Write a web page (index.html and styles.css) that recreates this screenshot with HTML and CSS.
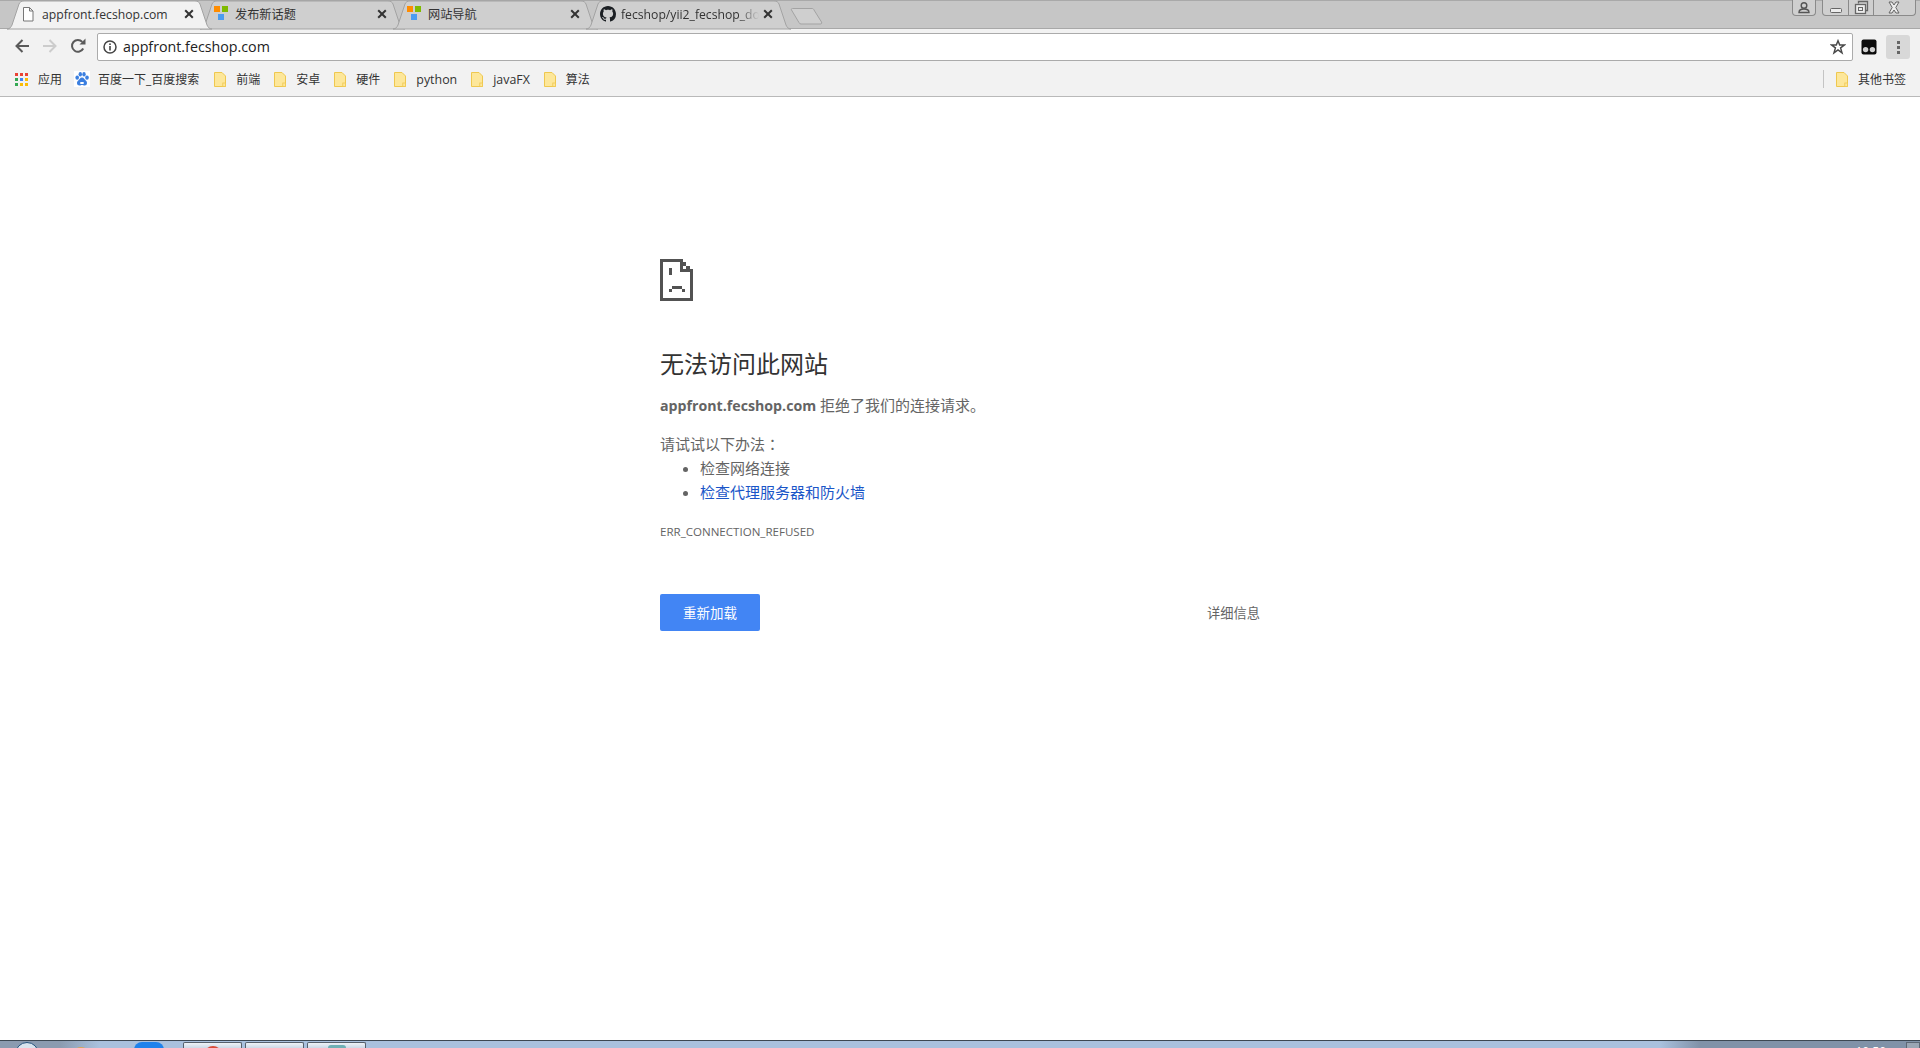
FILE: index.html
```html
<!DOCTYPE html>
<html lang="zh-CN">
<head>
<meta charset="utf-8">
<title>appfront.fecshop.com</title>
<link rel="stylesheet" href="styles.css">
</head>
<body>
<div class="browser">
  <div class="tabstrip">
    <div class="tab active">
      <svg class="tab-shape" viewBox="0 0 205 29"><path d="M0 29C3 29 4 27 5 25L12 4C13 2 14 1 17 1L188 1C191 1 192 2 193 4L200 25C201 27 202 29 205 29Z"/></svg>
      <svg class="tab-icon doc" viewBox="0 0 16 16"><path d="M3.5 1.5H9.5L13 5V15H3.5ZM9.5 1.5V5H13" fill="#fff" stroke="#777" stroke-width="1"/></svg>
      <span class="tab-title">appfront.fecshop.com</span>
      <svg class="tab-close" viewBox="0 0 10 10"><path d="M1.2 1.2L8.8 8.8M8.8 1.2L1.2 8.8"/></svg>
    </div>
    <div class="tab">
      <svg class="tab-shape" viewBox="0 0 205 29"><path d="M0 29C3 29 4 27 5 25L12 4C13 2 14 1 17 1L188 1C191 1 192 2 193 4L200 25C201 27 202 29 205 29Z"/></svg>
      <svg class="tab-icon" viewBox="0 0 16 16"><rect x="0" y="0" width="6" height="6" fill="#ff8c00"/><rect x="8" y="0" width="6" height="6" fill="#7fba00"/><rect x="4" y="8" width="6" height="6" fill="#4b9cf0"/></svg>
      <span class="tab-title">发布新话题</span>
      <svg class="tab-close" viewBox="0 0 10 10"><path d="M1.2 1.2L8.8 8.8M8.8 1.2L1.2 8.8"/></svg>
    </div>
    <div class="tab">
      <svg class="tab-shape" viewBox="0 0 205 29"><path d="M0 29C3 29 4 27 5 25L12 4C13 2 14 1 17 1L188 1C191 1 192 2 193 4L200 25C201 27 202 29 205 29Z"/></svg>
      <svg class="tab-icon" viewBox="0 0 16 16"><rect x="0" y="0" width="6" height="6" fill="#ff8c00"/><rect x="8" y="0" width="6" height="6" fill="#7fba00"/><rect x="4" y="8" width="6" height="6" fill="#4b9cf0"/></svg>
      <span class="tab-title">网站导航</span>
      <svg class="tab-close" viewBox="0 0 10 10"><path d="M1.2 1.2L8.8 8.8M8.8 1.2L1.2 8.8"/></svg>
    </div>
    <div class="tab">
      <svg class="tab-shape" viewBox="0 0 205 29"><path d="M0 29C3 29 4 27 5 25L12 4C13 2 14 1 17 1L188 1C191 1 192 2 193 4L200 25C201 27 202 29 205 29Z"/></svg>
      <svg class="tab-icon" viewBox="0 0 16 16"><path fill="#1b1f23" d="M8 0C3.58 0 0 3.58 0 8c0 3.54 2.29 6.53 5.47 7.59.4.07.55-.17.55-.38 0-.19-.01-.82-.01-1.49-2.01.37-2.53-.49-2.69-.94-.09-.23-.48-.94-.82-1.13-.28-.15-.68-.52-.01-.53.63-.01 1.08.58 1.23.82.72 1.21 1.87.87 2.33.66.07-.52.28-.87.51-1.07-1.78-.2-3.64-.89-3.64-3.95 0-.87.31-1.59.82-2.15-.08-.2-.36-1.02.08-2.12 0 0 .67-.21 2.2.82.64-.18 1.32-.27 2-.27.68 0 1.36.09 2 .27 1.53-1.04 2.2-.82 2.2-.82.44 1.1.16 1.92.08 2.12.51.56.82 1.27.82 2.15 0 3.07-1.87 3.75-3.65 3.95.29.25.54.73.54 1.48 0 1.07-.01 1.93-.01 2.2 0 .21.15.46.55.38A8.013 8.013 0 0 0 16 8c0-4.42-3.58-8-8-8z"/></svg>
      <span class="tab-title fade">fecshop/yii2_fecshop_docs</span>
      <svg class="tab-close" viewBox="0 0 10 10"><path d="M1.2 1.2L8.8 8.8M8.8 1.2L1.2 8.8"/></svg>
    </div>
    <svg class="new-tab" viewBox="0 0 36 17"><path d="M5.5 .5H25C26 .5 26.6 1 27 2L34.5 14C35 15.5 34.5 16 33 16H14C13 16 12.4 15.5 12 14.6L4.5 2C4 1 4.5 .5 5.5 .5Z"/></svg>
    <div class="window-controls">
      <div class="win-btn user">
        <svg viewBox="0 0 24 16" width="24" height="16"><circle cx="12" cy="5.5" r="2.8" fill="none" stroke="#555" stroke-width="1.4"/><path d="M7 12.5C7 9.8 9 9 12 9S17 9.8 17 12.5Z" fill="none" stroke="#555" stroke-width="1.4"/></svg>
      </div>
      <div class="win-group">
        <div class="win-btn min"><svg viewBox="0 0 26 16" width="26" height="16"><rect x="7.5" y="8.5" width="11" height="4" rx="1" fill="#ececec" stroke="#666"/></svg></div>
        <div class="win-btn max"><svg viewBox="0 0 25 16" width="25" height="16"><path d="M9.5 3.5V1.5H18.5V10.5H16.5" fill="none" stroke="#666" stroke-width="1.3"/><rect x="6.5" y="4.5" width="10" height="9" fill="#ececec" stroke="#666" stroke-width="1.3"/><rect x="9.5" y="7.5" width="4" height="3" fill="none" stroke="#666"/></svg></div>
        <div class="win-btn close"><svg viewBox="0 0 41 16" width="41" height="16"><path d="M15 2H18L20 5L22 2H25L21.8 7.5L25 13H22L20 10L18 13H15L18.2 7.5Z" fill="#ececec" stroke="#666"/></svg></div>
      </div>
    </div>
  </div>

  <div class="toolbar">
    <svg class="nav-icon" viewBox="0 0 16 16"><path d="M15 8H3M8.5 2L2.5 8L8.5 14" fill="none" stroke="#5a5a5a" stroke-width="2"/></svg>
    <svg class="nav-icon" viewBox="0 0 16 16"><path d="M1 8H13M7.5 2L13.5 8L7.5 14" fill="none" stroke="#ccc" stroke-width="2"/></svg>
    <svg class="nav-icon" viewBox="0 0 16 16"><path d="M13.2 10.5A5.9 5.9 0 1 1 12.3 3.9" fill="none" stroke="#5a5a5a" stroke-width="2"/><path d="M9.5 6.5H15.5V.5Z" fill="#5a5a5a"/></svg>
    <div class="omnibox">
      <svg class="info" viewBox="0 0 14 14"><circle cx="7" cy="7" r="6" fill="none" stroke="#444" stroke-width="1.5"/><rect x="6.2" y="6" width="1.6" height="4.5" fill="#444"/><rect x="6.2" y="3.4" width="1.6" height="1.6" fill="#444"/></svg>
      <span class="url">appfront.fecshop.com</span>
      <svg class="star" viewBox="0 0 16 16"><path d="M8 1.8L9.7 6H14.4L10.6 8.9L12 13.8L8 11L4 13.8L5.4 8.9L1.6 6H6.3Z" fill="none" stroke="#4a4a4a" stroke-width="1.5"/></svg>
    </div>
    <svg class="ext" viewBox="0 0 16 16"><rect x=".5" y=".5" width="15" height="15" rx="2" fill="#0b0b0b"/><circle cx="4.6" cy="10.6" r="2.7" fill="#cfcfcf"/><circle cx="11.4" cy="10.6" r="2.7" fill="#cfcfcf"/></svg>
    <div class="menu-btn"><i></i><i></i><i></i></div>
  </div>

  <div class="bookmarks">
    <div class="bm apps">
      <svg class="bm-apps" viewBox="0 0 13 13">
        <rect x="0" y="0" width="3" height="3" fill="#ea4335"/><rect x="5" y="0" width="3" height="3" fill="#ea4335"/><rect x="10" y="0" width="3" height="3" fill="#ea4335"/>
        <rect x="0" y="5" width="3" height="3" fill="#34a853"/><rect x="5" y="5" width="3" height="3" fill="#4285f4"/><rect x="10" y="5" width="3" height="3" fill="#fbbc05"/>
        <rect x="0" y="10" width="3" height="3" fill="#34a853"/><rect x="5" y="10" width="3" height="3" fill="#fbbc05"/><rect x="10" y="10" width="3" height="3" fill="#fbbc05"/>
      </svg>
      <span>应用</span>
    </div>
    <div class="bm baidu">
      <svg class="bm-baidu" viewBox="0 0 16 16"><rect width="16" height="16" fill="#fff"/><ellipse cx="3.2" cy="6.6" rx="1.8" ry="2.2" fill="#3b7fe0"/><ellipse cx="6.3" cy="3.2" rx="1.7" ry="2.2" fill="#3b7fe0"/><ellipse cx="10" cy="3.2" rx="1.7" ry="2.2" fill="#3b7fe0"/><ellipse cx="13" cy="6.6" rx="1.8" ry="2.2" fill="#3b7fe0"/><path d="M8 6.5C6 6.5 5.5 8.5 4 9.8C2.5 11 2.5 14.5 5.5 14.5C6.8 14.5 7 14 8 14C9 14 9.5 14.5 10.8 14.5C13.5 14.5 13.5 11 12 9.8C10.5 8.5 10 6.5 8 6.5Z" fill="#3b7fe0"/><path d="M6.3 11H9.7V13H6.3Z" fill="#fff"/></svg>
      <span>百度一下_百度搜索</span>
    </div>
    <div class="bm"><svg class="folder" viewBox="0 0 12 15"><path d="M.5 .5H8L11.5 4V14.5H.5Z" fill="#fde79a" stroke="#efc84f"/><rect x="8.8" y="11" width="2.7" height="3.5" fill="#fde79a" stroke="#efc84f" stroke-width=".8"/></svg><span>前端</span></div>
    <div class="bm"><svg class="folder" viewBox="0 0 12 15"><path d="M.5 .5H8L11.5 4V14.5H.5Z" fill="#fde79a" stroke="#efc84f"/><rect x="8.8" y="11" width="2.7" height="3.5" fill="#fde79a" stroke="#efc84f" stroke-width=".8"/></svg><span>安卓</span></div>
    <div class="bm"><svg class="folder" viewBox="0 0 12 15"><path d="M.5 .5H8L11.5 4V14.5H.5Z" fill="#fde79a" stroke="#efc84f"/><rect x="8.8" y="11" width="2.7" height="3.5" fill="#fde79a" stroke="#efc84f" stroke-width=".8"/></svg><span>硬件</span></div>
    <div class="bm"><svg class="folder" viewBox="0 0 12 15"><path d="M.5 .5H8L11.5 4V14.5H.5Z" fill="#fde79a" stroke="#efc84f"/><rect x="8.8" y="11" width="2.7" height="3.5" fill="#fde79a" stroke="#efc84f" stroke-width=".8"/></svg><span class="latin">python</span></div>
    <div class="bm"><svg class="folder" viewBox="0 0 12 15"><path d="M.5 .5H8L11.5 4V14.5H.5Z" fill="#fde79a" stroke="#efc84f"/><rect x="8.8" y="11" width="2.7" height="3.5" fill="#fde79a" stroke="#efc84f" stroke-width=".8"/></svg><span class="latin">javaFX</span></div>
    <div class="bm"><svg class="folder" viewBox="0 0 12 15"><path d="M.5 .5H8L11.5 4V14.5H.5Z" fill="#fde79a" stroke="#efc84f"/><rect x="8.8" y="11" width="2.7" height="3.5" fill="#fde79a" stroke="#efc84f" stroke-width=".8"/></svg><span>算法</span></div>
    <div class="bm other"><svg class="folder" viewBox="0 0 12 15"><path d="M.5 .5H8L11.5 4V14.5H.5Z" fill="#fde79a" stroke="#efc84f"/><rect x="8.8" y="11" width="2.7" height="3.5" fill="#fde79a" stroke="#efc84f" stroke-width=".8"/></svg><span>其他书签</span></div>
  </div>

  <main class="page">
    <div class="error">
      <svg class="sad-icon" viewBox="0 0 100 127" shape-rendering="crispEdges">
        <path fill="#525252" d="M0 0H70V10H80V20H90V30H100V127H0ZM10 10V117H90V40H60V10ZM70 20V30H80V20Z"/>
        <rect x="27" y="28" width="10" height="20" fill="#525252"/>
        <rect x="37" y="81" width="30" height="10" fill="#525252"/>
        <rect x="27" y="91" width="10" height="8" fill="#525252"/>
        <rect x="67" y="91" width="10" height="8" fill="#525252"/>
      </svg>
      <h1 class="title">无法访问此网站</h1>
      <p class="summary"><strong>appfront.fecshop.com</strong> 拒绝了我们的连接请求。</p>
      <p class="try">请试试以下办法<span class="colon" lang="zh-TW">：</span></p>
      <ul class="suggestions">
        <li>检查网络连接</li>
        <li><a href="#">检查代理服务器和防火墙</a></li>
      </ul>
      <div class="code">ERR_CONNECTION_REFUSED</div>
      <div class="actions">
        <button class="reload">重新加载</button>
        <span class="details">详细信息</span>
      </div>
    </div>
  </main>

  <div class="taskbar">
    <span class="orb"></span>
    <span class="tb-bump orange"></span>
    <span class="tb-bump blue"></span>
    <span class="tb-win first"><i class="red"></i></span>
    <span class="tb-win"></span>
    <span class="tb-win"><i class="teal"></i></span>
    <span class="clock">10:50</span>
    <span class="show-desktop"></span>
  </div>
</div>
</body>
</html>
```
FILE: styles.css
```css
* { box-sizing: border-box; }
html, body { margin: 0; padding: 0; height: 100%; background: #fff; }
body { font-family: "Open Sans", "Noto Sans CJK SC", sans-serif; overflow: hidden; }
.browser { height: 1048px; display: flex; flex-direction: column; overflow: hidden; }

/* tab strip */
.tabstrip {
  height: 29px; flex: none; display: flex; padding-left: 7px;
  background: #c6c6c6; border-top: 1px solid #a9a9a9; border-bottom: 1px solid #a8a8a8;
}
.tab {
  position: relative; flex: none; width: 205px; height: 28px; margin-top: -1px; margin-right: -12px;
  display: flex; align-items: center; padding: 0 18px 0 14px; color: #333; font-size: 12px;
}
.tab > *:not(.tab-shape) { position: relative; }
.tab-shape { position: absolute; left: 0; top: 0; width: 205px; height: 29px; overflow: visible; }
.tab-shape path { fill: #cfcfcf; stroke: #a3a3a3; stroke-width: 1; }
.tab.active { z-index: 2; }
.tab.active .tab-shape path { fill: #f2f2f2; }
.tab-icon { flex: none; width: 16px; height: 16px; margin-right: 5px; }
.tab-icon.doc { margin-left: -1px; margin-right: 6px; }
.tab-title { flex: 1; min-width: 0; white-space: nowrap; overflow: hidden; font-size: 12.2px; line-height: 18px; padding-top: 1px; }
.tab-title.fade { -webkit-mask-image: linear-gradient(90deg, #000 85%, transparent 100%); mask-image: linear-gradient(90deg, #000 85%, transparent 100%); }
.tab-close { flex: none; width: 10px; height: 10px; margin-left: 4px; }
.tab-close path { stroke: #333; stroke-width: 2; fill: none; }
.new-tab { flex: none; width: 38px; height: 17px; margin: 7px 0 0 7px; }
.new-tab path { fill: #cfcfcf; stroke: #a3a3a3; }

.window-controls { margin-left: auto; display: flex; gap: 6px; height: 16px; margin-top: -1px; padding-right: 4px; }
.win-btn { height: 16px; display: flex; }
.win-btn.user { width: 24px; border: 1px solid #8a8a8a; border-top: 0; border-radius: 0 0 4px 4px; background: #cfcfcf; justify-content: center; }
.win-group { display: flex; border: 1px solid #8a8a8a; border-top: 0; border-radius: 0 0 4px 4px; background: #cfcfcf; }
.win-btn.min { width: 26px; border-right: 1px solid #8a8a8a; }
.win-btn.max { width: 25px; border-right: 1px solid #8a8a8a; }
.win-btn.close { width: 41px; }
.win-btn svg { flex: none; }

/* toolbar */
.toolbar { height: 32px; flex: none; display: flex; align-items: flex-end; background: #f2f2f2; padding-left: 14px; }
.nav-icon { flex: none; width: 16px; height: 16px; margin: 0 12px 7px 0; }
.omnibox {
  flex: none; width: 1756px; height: 28px; margin-left: -1px; display: flex; align-items: center;
  background: #fff; border: 1px solid #ababab; border-radius: 2px; padding: 0 6px 0 5px;
}
.info { flex: none; width: 14px; height: 14px; margin-right: 6px; }
.url { flex: 1; font-size: 14.25px; color: #222; line-height: 20px; margin-top: -1px; }
.star { flex: none; width: 16px; height: 16px; }
.ext { flex: none; width: 16px; height: 16px; margin: 0 9px 6px 8px; }
.menu-btn { flex: none; width: 24px; height: 24px; margin-bottom: 2px; background: #d8d8d8; border-radius: 3px; display: flex; flex-direction: column; align-items: center; justify-content: center; gap: 2px; }
.menu-btn i { display: block; width: 3px; height: 3px; background: #666; }

/* bookmarks */
.bookmarks { height: 36px; flex: none; display: flex; align-items: center; gap: 14px; padding: 1px 14px 0 15px; background: #f2f2f2; border-bottom: 1px solid #b9b9b9; font-size: 12px; color: #333; }
.bm { display: flex; align-items: center; gap: 10px; white-space: nowrap; }
.bm.apps { gap: 10px; margin-right: -2px; }
.bm.baidu { gap: 8px; margin-right: 1px; }
.bm .latin { font-size: 12.4px; }
.bm-apps { width: 13px; height: 13px; flex: none; }
.bm-baidu { width: 16px; height: 16px; flex: none; }
.folder { width: 12px; height: 15px; flex: none; }
.bm.other { margin-left: auto; border-left: 1px solid #c4c4c4; padding-left: 12px; }

/* error */
.page { flex: 1; min-height: 0; background: #fff; padding: 162px 0 0 660px; }
.error { width: 600px; color: #646464; font-size: 15px; }
.sad-icon { display: block; width: 33px; height: 42px; }
.title { margin: 48px 0 0; font-size: 24px; font-weight: 400; line-height: 30px; color: #333; }
.summary { margin: 16px 0 0; line-height: 20px; }
.summary strong { font-weight: 700; font-size: 14.2px; }
.try { margin: 18px 0 0; line-height: 20px; }
.colon { font-family: "Noto Sans CJK TC", sans-serif; }
.suggestions { margin: 2px 0 0; padding: 0 0 0 40px; line-height: 24px; }
.suggestions a { color: #1a56c8; text-decoration: none; }
.code { margin-top: 20px; font-size: 11.55px; line-height: 16px; }
.actions { margin-top: 54px; display: flex; align-items: center; justify-content: space-between; }
.reload { width: 100px; height: 37px; border: 0; border-radius: 2px; background: #4285f4; color: #fff; font: inherit; font-size: 13.5px; line-height: 18px; padding: 0; }
.details { font-size: 13.25px; line-height: 18px; }

/* taskbar */
.taskbar {
  height: 8px; flex: none; display: flex; overflow: hidden; border-top: 1px solid #3d4853; padding-top: 1px;
  background: linear-gradient(90deg, #8b9bb0 0, #8b9bb0 60px, #a9c1de 100px, #a9c1de 1660px, #8092a8 1700px, #8092a8 100%);
}
.orb { flex: none; width: 24px; height: 24px; margin-left: 15px; border-radius: 50%; border: 1px solid #23527c; background: #d9e4ee; }
.tb-bump { flex: none; border-radius: 8px 8px 0 0; height: 12px; }
.tb-bump.orange { width: 18px; margin: 5px 0 0 33px; background: #d9a55a; border-radius: 9px 9px 0 0; }
.tb-bump.blue { width: 30px; margin-left: 44px; background: #1e82ec; }
.tb-win { flex: none; width: 59px; margin-left: 3px; border: 1px solid #56606c; border-bottom: 0; border-radius: 2px 2px 0 0; background: linear-gradient(#eef3f8, #cdd9e7); display: flex; justify-content: center; }
.tb-win.first { margin-left: 19px; }
.tb-win i { display: block; width: 18px; height: 18px; border-radius: 50%; margin-top: 3px; }
.tb-win i.red { background: #d84a38; }
.tb-win i.teal { background: #6fb0b5; border-radius: 3px; margin-top: 2px; }
.clock { margin-left: auto; margin-top: 4px; font-size: 12px; line-height: 12px; color: #fff; }
.show-desktop { flex: none; width: 14px; margin-left: 20px; background: #9aa6b4; border: 1px solid #5d6875; border-bottom: 0; }
```
